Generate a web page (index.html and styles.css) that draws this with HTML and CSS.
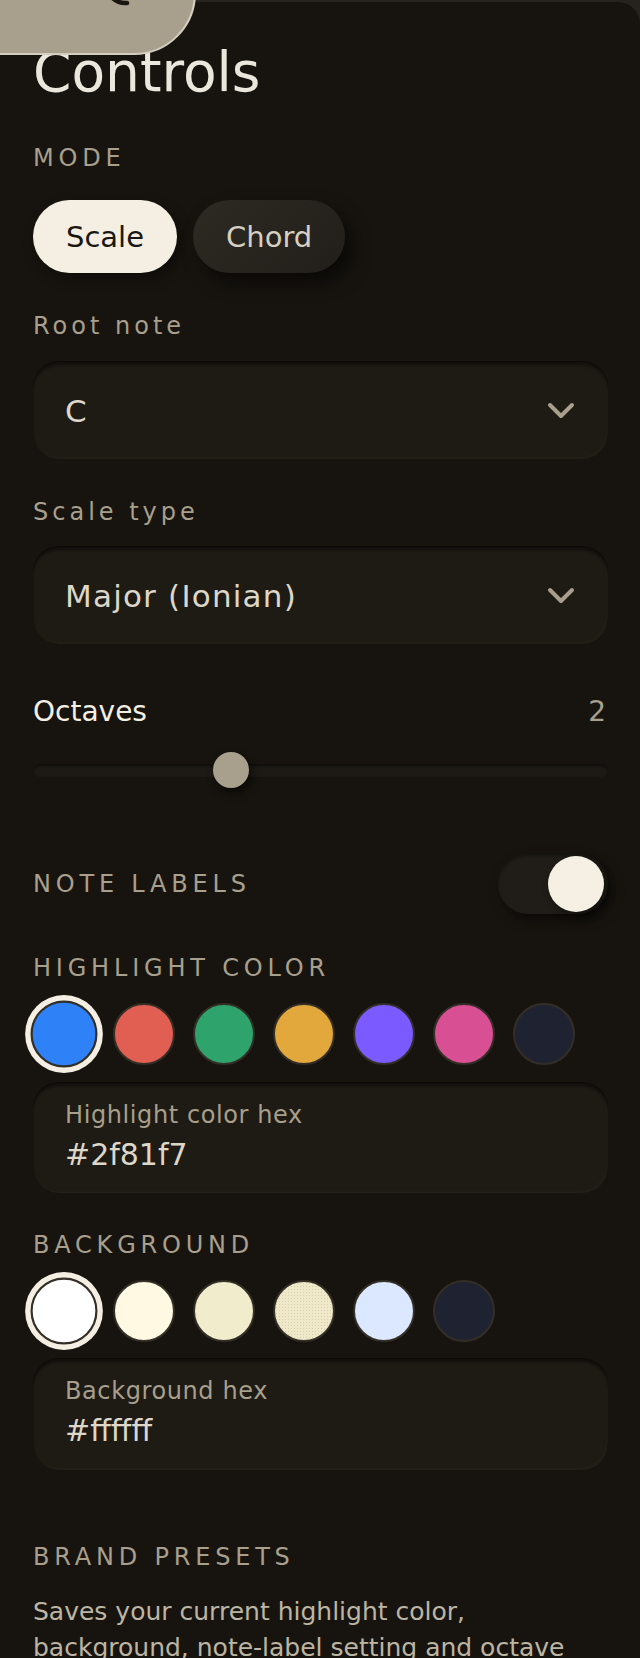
FILE: index.html
```html
<!DOCTYPE html>
<html lang="en">
<head>
    <meta charset="UTF-8">
    <title>Scale Visualizer - Controls</title>
    <link rel="stylesheet" href="styles.css">
</head>
<body>
    <div class="fab">
        <svg class="fab-icon" width="34" height="20" viewBox="0 0 34 20">
            <path d="M8 2 Q 15 14 27 13" fill="none" stroke="#1a1712" stroke-width="4.5" stroke-linecap="round"/>
        </svg>
    </div>

    <main class="panel">
        <h1 class="title">Controls</h1>

        <div class="caps-label mode-label">MODE</div>
        <div class="modes">
            <button class="mode-btn active">Scale</button>
            <button class="mode-btn">Chord</button>
        </div>

        <div class="field-label first">Root note</div>
        <div class="select">
            <span>C</span>
            <svg width="28" height="17" viewBox="0 0 28 17"><path d="M3 3 L14 14 L25 3" fill="none" stroke="#a89f8c" stroke-width="4" stroke-linecap="round" stroke-linejoin="round"/></svg>
        </div>

        <div class="field-label">Scale type</div>
        <div class="select">
            <span>Major (Ionian)</span>
            <svg width="28" height="17" viewBox="0 0 28 17"><path d="M3 3 L14 14 L25 3" fill="none" stroke="#a89f8c" stroke-width="4" stroke-linecap="round" stroke-linejoin="round"/></svg>
        </div>

        <div class="range-head">
            <span class="range-name">Octaves</span>
            <span class="range-value">2</span>
        </div>
        <div class="slider">
            <div class="slider-track"></div>
            <div class="slider-thumb" style="left: calc((100% - 36px) * 0.3333)"></div>
        </div>

        <div class="toggle-row">
            <span class="caps-label">NOTE LABELS</span>
            <div class="toggle on"><div class="toggle-knob"></div></div>
        </div>

        <div class="caps-label section-label">HIGHLIGHT COLOR</div>
        <div class="swatches">
            <button class="swatch selected" style="background: #2f81f7"></button>
            <button class="swatch" style="background: #e05e52"></button>
            <button class="swatch" style="background: #2ea36c"></button>
            <button class="swatch" style="background: #e3a83b"></button>
            <button class="swatch" style="background: #7b5bff"></button>
            <button class="swatch" style="background: #d84f93"></button>
            <button class="swatch" style="background: #1f2231"></button>
        </div>
        <div class="hex-field">
            <div class="hex-label">Highlight color hex</div>
            <div class="hex-value">#2f81f7</div>
        </div>

        <div class="caps-label section-label">BACKGROUND</div>
        <div class="swatches">
            <button class="swatch selected" style="background: #ffffff"></button>
            <button class="swatch" style="background: #fff8e2"></button>
            <button class="swatch" style="background: #f1edcc"></button>
            <button class="swatch paper"></button>
            <button class="swatch" style="background: #dbe8ff"></button>
            <button class="swatch" style="background: #1f2231"></button>
        </div>
        <div class="hex-field bg-field">
            <div class="hex-label">Background hex</div>
            <div class="hex-value">#ffffff</div>
        </div>

        <div class="caps-label presets-label">BRAND PRESETS</div>
        <p class="note">Saves your current highlight color, background, note-label setting and octave count as a preset you can load again later.</p>
    </main>
</body>
</html>
```

FILE: styles.css
```css
* {
    box-sizing: border-box;
}

body {
    margin: 0;
    background-color: #26231e;
    font-family: "DejaVu Sans", sans-serif;
    color: #ebe6da;
}

/* floating button, mostly scrolled off the top */
.fab {
    position: absolute;
    left: -100px;
    top: -70px;
    width: 296px;
    height: 125px;
    border-radius: 62px;
    background-color: #a89f8c;
    border: 2px solid #d4cec0;
    z-index: 2;
}

.fab-icon {
    position: absolute;
    left: 198px;
    top: 58px;
}

.panel {
    margin-top: 2px;
    min-height: 1720px;
    padding: 40px 32px 60px 33px;
    background-color: #17140f;
    border-radius: 0 22px 0 0;
}

.title {
    margin: 0;
    font-size: 55px;
    line-height: 60px;
    font-weight: 400;
    color: #ece7dc;
}

.caps-label {
    font-size: 24px;
    line-height: 28px;
    letter-spacing: 4.8px;
    color: #a89f8c;
}

.mode-label {
    margin-top: 42px;
}

.modes {
    display: flex;
    gap: 16px;
    margin-top: 28px;
}

.mode-btn {
    height: 73px;
    padding: 0 33px;
    border: none;
    border-radius: 37px;
    font-family: inherit;
    font-size: 29px;
    background: linear-gradient(135deg, #2d2a24, #221f1a);
    color: #d6d0c2;
    box-shadow: 8px 10px 18px rgba(0, 0, 0, 0.55);
    cursor: pointer;
}

.mode-btn.active {
    background: #f4efe2;
    color: #1a1712;
    box-shadow: 4px 6px 14px rgba(0, 0, 0, 0.4);
}

.field-label {
    margin-top: 39px;
    font-size: 24px;
    line-height: 28px;
    letter-spacing: 4px;
    color: #a89f8c;
}

.select {
    display: flex;
    align-items: center;
    justify-content: space-between;
    height: 97px;
    margin-top: 21px;
    padding: 0 33px 0 32px;
    border-radius: 26px;
    background-color: #1e1b15;
    box-shadow: inset 0 3px 3px rgba(0, 0, 0, 0.45), 0 -1px 0 rgba(0, 0, 0, 0.5), inset -2px -2px 3px rgba(255, 255, 255, 0.025);
    font-size: 31px;
    letter-spacing: 1.2px;
    color: #ddd7ca;
}

.field-label.first + .select {
    margin-top: 22px;
}

.range-head {
    display: flex;
    justify-content: space-between;
    margin-top: 52px;
    font-size: 28px;
    line-height: 32px;
}

.range-name {
    color: #f4efe3;
}

.range-value {
    color: #a89f8c;
    padding-right: 2px;
}

.slider {
    position: relative;
    height: 36px;
    margin-top: 24px;
    display: flex;
    align-items: center;
}

.slider-track {
    width: 100%;
    height: 13px;
    border-radius: 7px;
    background-color: #1d1a15;
    box-shadow: inset 0 2px 3px rgba(0, 0, 0, 0.5);
}

.slider-thumb {
    position: absolute;
    top: 0;
    width: 36px;
    height: 36px;
    border-radius: 50%;
    background-color: #a89f8c;
    box-shadow: 3px 5px 8px rgba(0, 0, 0, 0.55);
}

.toggle-row {
    display: flex;
    align-items: center;
    justify-content: space-between;
    height: 64px;
    margin-top: 64px;
}

.toggle {
    display: flex;
    align-items: center;
    justify-content: flex-end;
    width: 110px;
    height: 60px;
    padding: 0 4px;
    border-radius: 30px;
    background-color: #201d18;
    box-shadow: 4px 6px 12px rgba(0, 0, 0, 0.5), inset 0 2px 3px rgba(0, 0, 0, 0.3);
}

.toggle-knob {
    width: 56px;
    height: 56px;
    border-radius: 50%;
    background-color: #f5f0e3;
    box-shadow: 3px 4px 8px rgba(0, 0, 0, 0.45);
}

.section-label {
    margin-top: 38px;
}

.section-label + .swatches {
    margin-top: 21px;
}

.swatches {
    display: flex;
    gap: 18px;
}

.swatch {
    width: 62px;
    height: 62px;
    padding: 0;
    border: 2px solid #332e26;
    border-radius: 50%;
    cursor: pointer;
}

.swatch.selected {
    transform: scale(1.08);
    box-shadow: 0 0 0 5px #f4efe2;
}

.swatch.paper {
    background-color: #efe8c9;
    background-image: radial-gradient(#d8d0ad 0.7px, transparent 0.9px);
    background-size: 3px 3px;
}

.hex-field {
    height: 110px;
    margin-top: 18px;
    padding: 18px 32px 0;
    border-radius: 26px;
    background-color: #1e1b15;
    box-shadow: inset 0 3px 3px rgba(0, 0, 0, 0.45), 0 -1px 0 rgba(0, 0, 0, 0.5), inset -2px -2px 3px rgba(255, 255, 255, 0.025);
}

.hex-field.bg-field {
    height: 111px;
    margin-top: 17px;
}

.hex-label {
    font-size: 24px;
    line-height: 28px;
    letter-spacing: 0.6px;
    color: #a89f8c;
}

.hex-value {
    margin-top: 8px;
    font-size: 30px;
    line-height: 36px;
    color: #ddd7ca;
}

.presets-label {
    margin-top: 73px;
}

.note {
    margin: 23px 0 0;
    font-size: 25px;
    line-height: 36px;
    color: #bdb5a3;
}
```
